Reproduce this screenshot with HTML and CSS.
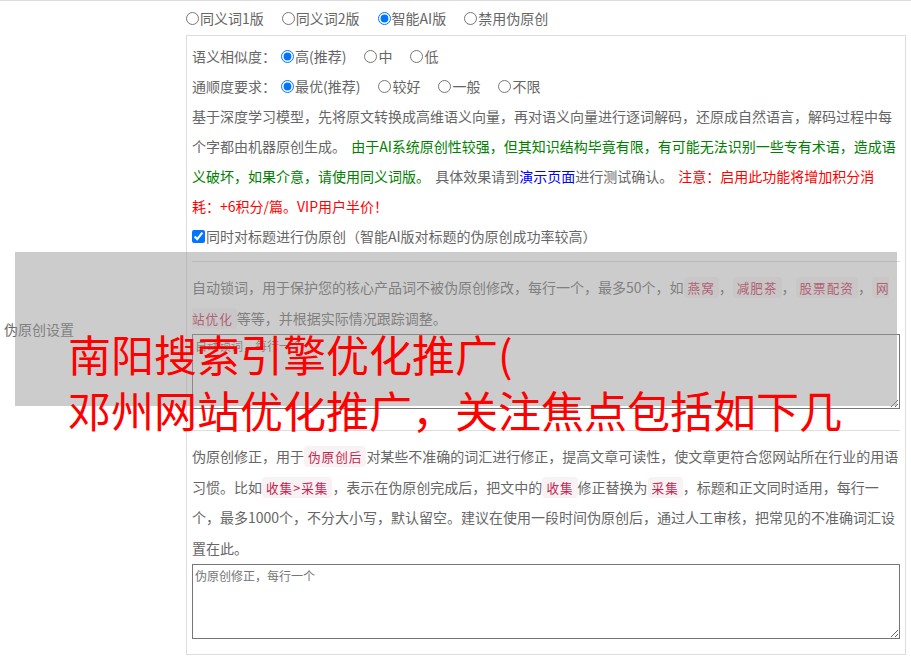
FILE: index.html
```html
<!DOCTYPE html>
<html lang="zh-CN">
<head>
<meta charset="utf-8">
<title>伪原创设置</title>
<link rel="stylesheet" href="styles.css">
</head>
<body>
<div class="page">
  <div class="label">伪原创设置</div>
  <div class="main">
    <div class="modes">
      <label class="opt"><input type="radio" name="mode">同义词1版</label>
      <label class="opt"><input type="radio" name="mode">同义词2版</label>
      <label class="opt"><input type="radio" name="mode" checked>智能AI版</label>
      <label class="opt"><input type="radio" name="mode">禁用伪原创</label>
    </div>
    <div class="box">
      <div class="line"><span class="key">语义相似度：</span><label class="opt"><input type="radio" name="sim" checked>高(推荐)</label><label class="opt"><input type="radio" name="sim">中</label><label class="opt"><input type="radio" name="sim">低</label></div>
      <div class="line"><span class="key">通顺度要求：</span><label class="opt"><input type="radio" name="flu" checked>最优(推荐)</label><label class="opt"><input type="radio" name="flu">较好</label><label class="opt"><input type="radio" name="flu">一般</label><label class="opt"><input type="radio" name="flu">不限</label></div>
      <p class="desc">基于深度学习模型，先将原文转换成高维语义向量，再对语义向量进行逐词解码，还原成自然语言，解码过程中每个字都由机器原创生成。 <span class="green">由于AI系统原创性较强，但其知识结构毕竟有限，有可能无法识别一些专有术语，造成语义破坏，如果介意，请使用同义词版。</span> 具体效果请到<a class="link" href="#">演示页面</a>进行测试确认。 <span class="red">注意：启用此功能将增加积分消耗：+6积分/篇。VIP用户半价！</span></p>
      <div class="line"><label class="check"><input type="checkbox" checked>同时对标题进行伪原创（智能AI版对标题的伪原创成功率较高）</label></div>
      <hr class="sep">
      <p class="note lock">自动锁词，用于保护您的核心产品词不被伪原创修改，每行一个，最多50个，如<code class="chip">燕窝</code>，<code class="chip">减肥茶</code>，<code class="chip">股票配资</code>，<code class="chip">网站优化</code>等等，并根据实际情况跟踪调整。</p>
      <textarea class="field first" placeholder="自动锁词，每行一个"></textarea>
      <hr class="sep">
      <p class="note fix">伪原创修正，用于<code class="chip">伪原创后</code>对某些不准确的词汇进行修正，提高文章可读性，使文章更符合您网站所在行业的用语习惯。比如<code class="chip">收集&gt;采集</code>，表示在伪原创完成后，把文中的<code class="chip">收集</code>修正替换为<code class="chip">采集</code>，标题和正文同时适用，每行一个，最多1000个，不分大小写，默认留空。建议在使用一段时间伪原创后，通过人工审核，把常见的不准确词汇设置在此。</p>
      <textarea class="field" placeholder="伪原创修正，每行一个"></textarea>
    </div>
  </div>
</div>
<div class="mask"></div>
<div class="ad">南阳搜索引擎优化推广(<br>邓州网站优化推广，关注焦点包括如下几</div>
</body>
</html>
```

FILE: styles.css
```css
html, body {
  margin: 0;
  padding: 0;
  background: #fff;
}
body {
  font-family: "Noto Sans CJK SC", "Noto Sans", sans-serif;
  font-size: 14px;
  color: #666;
  width: 911px;
  height: 658px;
  overflow: hidden;
  position: relative;
}
.page {
  border-top: 1px solid #ddd;
  display: grid;
  grid-template-columns: 186px 720px;
}
.label {
  display: flex;
  align-items: center;
  padding: 2px 0 0 4px;
}
.main {
  padding-top: 2px;
}
.modes, .line {
  display: flex;
  align-items: center;
  height: 30px;
  line-height: 30px;
  white-space: nowrap;
}
.opt {
  display: inline-flex;
  align-items: center;
  margin-right: 18px;
}
.opt input, .check input {
  width: 13px;
  height: 13px;
  margin: 0 1px 0 0;
}
.check {
  display: inline-flex;
  align-items: center;
}
.key {
  margin-right: 5px;
}
.box {
  margin-top: 2px;
  border: 1px solid #ddd;
  padding: 5px;
}
.desc {
  margin: 0;
  line-height: 30px;
  word-spacing: 2px;
}
.green { color: #008000; }
.red { color: #f00; }
.link { color: #00f; text-decoration: none; }
.sep {
  border: 0;
  border-top: 1px solid #ddd;
  margin: 10px 0;
  height: 0;
}
.note {
  margin: 0;
}
.lock { line-height: 31px; }
.fix { line-height: 30.7px; }
.chip {
  font-family: "Noto Sans CJK SC", sans-serif;
  font-size: 90%;
  line-height: 1;
  letter-spacing: 1px;
  padding: 1px 4px;
  color: #c7254e;
  background: #f9f2f4;
  border-radius: 4px;
}
.field {
  display: block;
  box-sizing: border-box;
  width: 100%;
  height: 75px;
  margin: 0 0 10px;
  padding: 2px;
  border: 1px solid #767676;
  font-family: "Noto Sans CJK SC", sans-serif;
  font-size: 12px;
  line-height: 18px;
  color: #333;
}
.field.first { margin-bottom: 21px; }
.field::placeholder { color: #757575; }
.mask {
  position: absolute;
  left: 15px;
  top: 252px;
  width: 882px;
  height: 154px;
  background: rgba(153, 153, 153, 0.5);
}
.ad {
  position: absolute;
  left: 68px;
  top: 325px;
  font-size: 43px;
  line-height: 56px;
  color: #f00;
  white-space: nowrap;
}
```
